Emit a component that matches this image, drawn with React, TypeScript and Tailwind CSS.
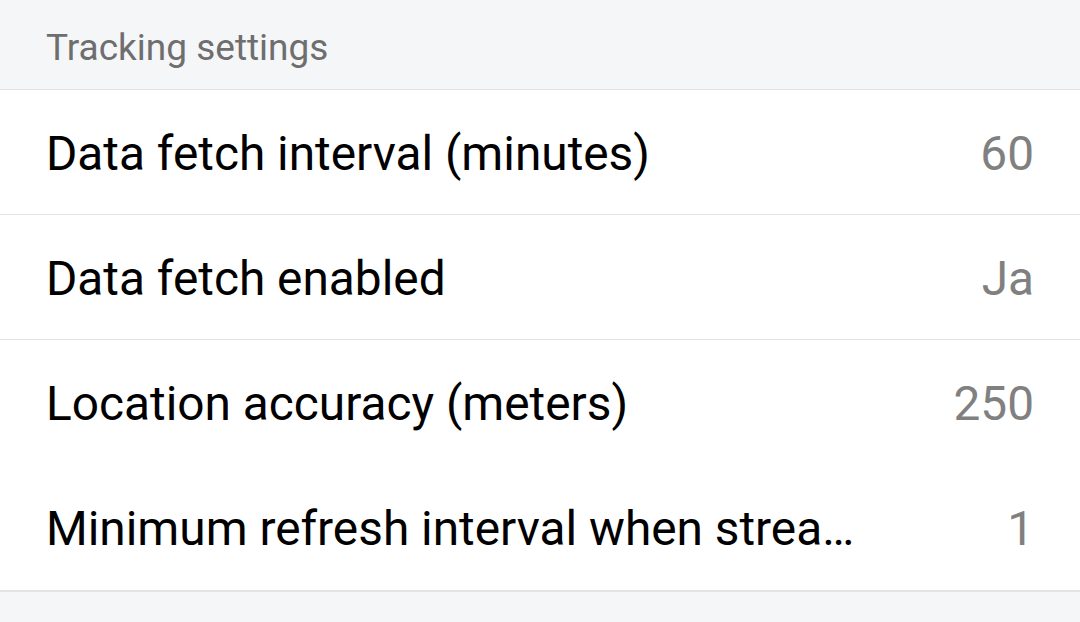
const rows = [
	{ label: "Data fetch interval (minutes)", value: "60", divider: true },
	{ label: "Data fetch enabled", value: "Ja", divider: true },
	{ label: "Location accuracy (meters)", value: "250", divider: false },
	{ label: "Minimum refresh interval when streaming (seconds)", value: "1", divider: false },
];

export default function App() {
	return (
		<div className="min-h-screen w-full bg-[#f5f6f8] font-['Roboto',sans-serif]">
			<div className="h-[90px] flex items-center px-[46px] border-b border-[#e3e3e3]">
				<span className="text-[37px] text-[#6e6e6e] pt-[6px]">Tracking settings</span>
			</div>
			<div className="bg-white border-b-2 border-[#e2e3e6]">
				{rows.map((row, i) => (
					<div
						key={i}
						className={`h-[125px] flex items-center pl-[46px] pr-[46px] pt-[5px] ${row.divider ? "border-b border-[#e3e3e3]" : ""}`}
					>
						<span className="flex-1 min-w-0 truncate mr-[140px] text-[47.8px] text-black">{row.label}</span>
						<span className="text-[47.8px] text-[#808080]">{row.value}</span>
					</div>
				))}
			</div>
		</div>
	);
}
